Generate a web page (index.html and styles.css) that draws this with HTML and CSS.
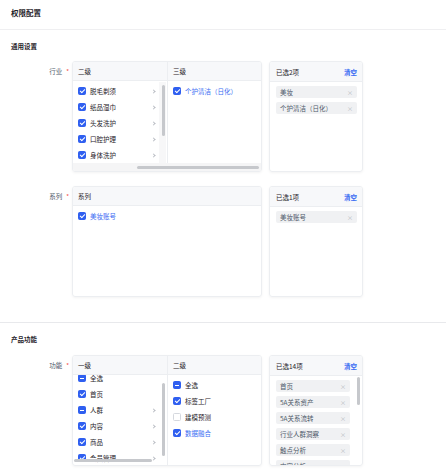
FILE: index.html
```html
<!DOCTYPE html>
<html lang="zh-CN">
<head>
<meta charset="utf-8">
<title>权限配置</title>
<link rel="stylesheet" href="styles.css">
</head>
<body>
<div class="page">
  <header class="page-head"><h1 class="page-title">权限配置</h1></header>

  <section class="section">
    <h2 class="section-title">通用设置</h2>

    <div class="field">
      <div class="field-label">行业<span class="req">*</span></div>
      <div class="cascader">
        <div class="col col-first">
          <div class="col-head">二级</div>
          <div class="col-body">
            <div class="opt"><span class="cb checked"></span><span class="opt-text">脱毛剃须</span><span class="chev"></span></div>
            <div class="opt"><span class="cb checked"></span><span class="opt-text">纸品湿巾</span><span class="chev"></span></div>
            <div class="opt"><span class="cb checked"></span><span class="opt-text">头发洗护</span><span class="chev"></span></div>
            <div class="opt"><span class="cb checked"></span><span class="opt-text">口腔护理</span><span class="chev"></span></div>
            <div class="opt"><span class="cb checked"></span><span class="opt-text">身体洗护</span><span class="chev"></span></div>
          </div>
          <div class="vtrack"></div>
          <div class="vthumb vthumb-a"></div>
        </div>
        <div class="col">
          <div class="col-head">三级</div>
          <div class="col-body">
            <div class="opt"><span class="cb checked"></span><span class="opt-text active">个护清洁（日化）</span></div>
          </div>
        </div>
        <div class="htrack"></div>
        <div class="hthumb hthumb-a"></div>
      </div>
      <div class="picked">
        <div class="picked-head"><span>已选2项</span><span class="clear">清空</span></div>
        <div class="picked-body">
          <div class="tag"><span>美妆</span><span class="x">×</span></div>
          <div class="tag"><span>个护清洁（日化）</span><span class="x">×</span></div>
        </div>
      </div>
    </div>

    <div class="field">
      <div class="field-label">系列<span class="req">*</span></div>
      <div class="cascader">
        <div class="col col-full">
          <div class="col-head">系列</div>
          <div class="col-body">
            <div class="opt"><span class="cb checked"></span><span class="opt-text active">美妆账号</span></div>
          </div>
        </div>
      </div>
      <div class="picked">
        <div class="picked-head"><span>已选1项</span><span class="clear">清空</span></div>
        <div class="picked-body">
          <div class="tag"><span>美妆账号</span><span class="x">×</span></div>
        </div>
      </div>
    </div>
  </section>

  <section class="section section-b">
    <h2 class="section-title">产品功能</h2>

    <div class="field">
      <div class="field-label">功能<span class="req">*</span></div>
      <div class="cascader">
        <div class="col col-first">
          <div class="col-head">一级</div>
          <div class="col-body">
            <div class="scrolled">
              <div class="opt"><span class="cb half"></span><span class="opt-text">全选</span></div>
              <div class="opt"><span class="cb checked"></span><span class="opt-text">首页</span></div>
              <div class="opt"><span class="cb half"></span><span class="opt-text">人群</span><span class="chev"></span></div>
              <div class="opt"><span class="cb checked"></span><span class="opt-text">内容</span><span class="chev"></span></div>
              <div class="opt"><span class="cb checked"></span><span class="opt-text">商品</span><span class="chev"></span></div>
              <div class="opt"><span class="cb checked"></span><span class="opt-text">会员管理</span><span class="chev"></span></div>
            </div>
          </div>
          <div class="vthumb vthumb-b"></div>
        </div>
        <div class="col">
          <div class="col-head">二级</div>
          <div class="col-body">
            <div class="opt"><span class="cb half"></span><span class="opt-text">全选</span></div>
            <div class="opt"><span class="cb checked"></span><span class="opt-text">标签工厂</span></div>
            <div class="opt"><span class="cb"></span><span class="opt-text">建模预测</span></div>
            <div class="opt"><span class="cb checked"></span><span class="opt-text active">数据融合</span></div>
          </div>
        </div>
        <div class="hthumb hthumb-b"></div>
      </div>
      <div class="picked">
        <div class="picked-head"><span>已选14项</span><span class="clear">清空</span></div>
        <div class="picked-body picked-scroll">
          <div class="tag"><span>首页</span><span class="x">×</span></div>
          <div class="tag"><span>5A关系资产</span><span class="x">×</span></div>
          <div class="tag"><span>5A关系流转</span><span class="x">×</span></div>
          <div class="tag"><span>行业人群洞察</span><span class="x">×</span></div>
          <div class="tag"><span>触点分析</span><span class="x">×</span></div>
          <div class="tag"><span>内容分析</span><span class="x">×</span></div>
          <div class="vthumb vthumb-c"></div>
        </div>
      </div>
    </div>
  </section>
</div>
</body>
</html>
```

FILE: styles.css
```css
* { box-sizing: border-box; }

html, body {
  margin: 0;
  padding: 0;
  background: #ffffff;
}

body {
  font-family: "Noto Sans CJK SC", "Noto Sans", sans-serif;
  color: #1f2329;
  font-size: 6.5px;
}

.page-head {
  height: 30px;
  padding: 6px 11px 0;
  border-bottom: 1px solid #efeff1;
}

.page-title {
  margin: 0;
  font-size: 7.5px;
  line-height: 13px;
  font-weight: 700;
  color: #1f2329;
}

.section {
  padding: 11px 0 25px;
}

.section-b {
  border-top: 1px solid #e8e9ec;
  padding-top: 11px;
  margin-top: 0;
}

.section-title {
  margin: 0 0 10px 11px;
  font-size: 6.5px;
  line-height: 10px;
  font-weight: 700;
  color: #1f2329;
}

.section-b .section-title {
  margin-bottom: 11px;
}

.field {
  display: flex;
  align-items: flex-start;
  margin-bottom: 14px;
}

.field:last-child {
  margin-bottom: 0;
}

.field-label {
  width: 72px;
  padding: 5px 3px 0 0;
  text-align: right;
  line-height: 10px;
  color: #4e5969;
  font-size: 6.5px;
}

.req {
  color: #f54a45;
  margin-left: 4px;
  font-size: 6px;
}

.cascader {
  position: relative;
  width: 190px;
  height: 111px;
  border: 1px solid #eceef1;
  border-radius: 3px;
  box-shadow: 0 1px 3px rgba(0, 0, 0, 0.05);
  display: grid;
  grid-template-columns: 95px 1fr;
  overflow: hidden;
}

.col {
  position: relative;
  display: flex;
  flex-direction: column;
  min-width: 0;
}

.col-first {
  border-right: 1px solid #eceef1;
}

.col-full {
  grid-column: 1 / span 2;
}

.col-head {
  height: 19px;
  flex: none;
  background: #f7f8fa;
  border-bottom: 1px solid #eceef1;
  padding-left: 5px;
  line-height: 18px;
  color: #1f2329;
}

.col-body {
  flex: 1;
  padding-top: 2px;
  overflow: hidden;
}

.scrolled {
  margin-top: -7px;
}

.opt {
  height: 16px;
  display: flex;
  align-items: center;
  padding-left: 5px;
  padding-right: 12px;
}

.opt-text {
  flex: 1;
  margin-left: 4px;
  color: #1f2329;
  white-space: nowrap;
}

.opt-text.active {
  color: #3a6cf3;
}

.cb {
  position: relative;
  flex: none;
  width: 8px;
  height: 8px;
  border-radius: 1.5px;
  border: 1px solid #d5d8de;
  background: #fff;
}

.cb.checked,
.cb.half {
  background: #2f5ff0;
  border-color: #2f5ff0;
}

.cb.checked::after {
  content: "";
  position: absolute;
  left: 1.8px;
  top: 0.3px;
  width: 2px;
  height: 4px;
  border: solid #fff;
  border-width: 0 1px 1px 0;
  transform: rotate(45deg);
}

.cb.half::after {
  content: "";
  position: absolute;
  left: 1px;
  top: 2.5px;
  width: 4px;
  height: 1px;
  background: #fff;
}

.chev {
  flex: none;
  width: 3px;
  height: 3px;
  border: solid #b9bdc4;
  border-width: 0.8px 0.8px 0 0;
  transform: rotate(45deg);
}

.vtrack {
  position: absolute;
  right: 1px;
  top: 20px;
  width: 7px;
  bottom: 8px;
  background: #f7f7f8;
}

.vthumb {
  position: absolute;
  width: 3px;
  border-radius: 2px;
  background: #c6c8cc;
}

.vthumb-a { right: 2px; top: 23px; height: 51px; }
.vthumb-b { right: 2px; top: 27px; height: 73px; }
.vthumb-c { right: 2px; top: 1px; height: 28px; }

.htrack {
  position: absolute;
  left: 0;
  right: 0;
  bottom: 0;
  height: 8px;
  background: #f5f5f6;
}

.hthumb {
  position: absolute;
  height: 3px;
  border-radius: 2px;
  background: #c6c8cc;
}

.hthumb-a { left: 64px; right: 2px; bottom: 2px; }
.hthumb-b { left: 1px; width: 78px; bottom: 3px; }

.picked {
  width: 94px;
  height: 111px;
  margin-left: 7px;
  border: 1px solid #eceef1;
  border-radius: 3px;
  box-shadow: 0 1px 3px rgba(0, 0, 0, 0.05);
  display: flex;
  flex-direction: column;
  overflow: hidden;
}

.picked-head {
  height: 20px;
  flex: none;
  background: #f7f8fa;
  border-bottom: 1px solid #eceef1;
  display: flex;
  align-items: center;
  justify-content: space-between;
  padding: 0 5px 0 6px;
  color: #1f2329;
}

.clear {
  color: #3a6cf3;
  font-weight: 700;
}

.picked-body {
  position: relative;
  flex: 1;
  padding: 4px 5px 0 6px;
  display: flex;
  flex-direction: column;
  gap: 4px;
  overflow: hidden;
}

.picked-scroll {
  padding-right: 12px;
}

.tag {
  flex: none;
  height: 12px;
  border-radius: 2px;
  background: #f0f1f3;
  display: flex;
  align-items: center;
  justify-content: space-between;
  padding: 0 4px;
  color: #4e5969;
  white-space: nowrap;
}

.x {
  color: #b5b8be;
  font-size: 6px;
}
```
